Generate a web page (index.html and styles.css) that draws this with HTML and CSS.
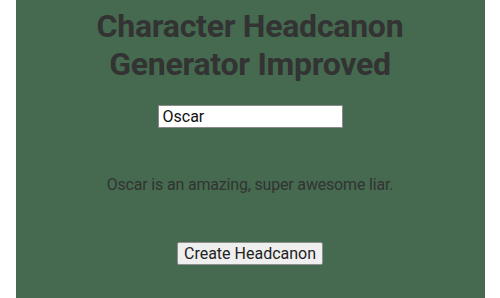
FILE: index.html
```html
<!DOCTYPE html>
<html>
<head>
<meta charset="utf-8">
<link rel="stylesheet" href="styles.css">
</head>
<body>
<main class="panel">
  <h1 class="title">Character Headcanon Generator Improved</h1>
  <input class="name-input" type="text" value="Oscar">
  <p class="result">Oscar is an amazing, super awesome liar.</p>
  <button class="create-btn">Create Headcanon</button>
</main>
</body>
</html>
```

FILE: styles.css
```css
html, body {
  margin: 0;
  padding: 0;
  background: #ffffff;
}
.panel {
  width: 469px;
  margin: 0 auto;
  min-height: 100vh;
  box-sizing: border-box;
  padding-top: 8px;
  background: #456a4f;
  text-align: center;
  font-family: Roboto, "Liberation Sans", sans-serif;
  color: #333333;
  display: flex;
  flex-direction: column;
  align-items: center;
}
.title {
  margin: 0;
  font-size: 32px;
  font-weight: 700;
  line-height: 37.5px;
  letter-spacing: -0.25px;
  width: 340px;
}
.name-input {
  margin-top: 22px;
  width: 185px;
  height: 23px;
  box-sizing: border-box;
  padding: 1px 4px;
  border: 1px solid #8a8a8a;
  border-radius: 0;
  font-family: Roboto, "Liberation Sans", sans-serif;
  font-size: 16px;
  color: #111;
  background: #fff;
}
.result {
  margin: 47px 0 0;
  font-size: 16px;
  line-height: 19px;
  letter-spacing: -0.18px;
  color: #333;
}
.create-btn {
  margin-top: 48px;
  height: 23px;
  box-sizing: border-box;
  padding: 0 6px;
  border: 1px solid #8f8f8f;
  border-radius: 2px;
  background: #efefef;
  font-family: Roboto, "Liberation Sans", sans-serif;
  font-size: 16px;
  line-height: 19px;
  color: #222;
}
```
